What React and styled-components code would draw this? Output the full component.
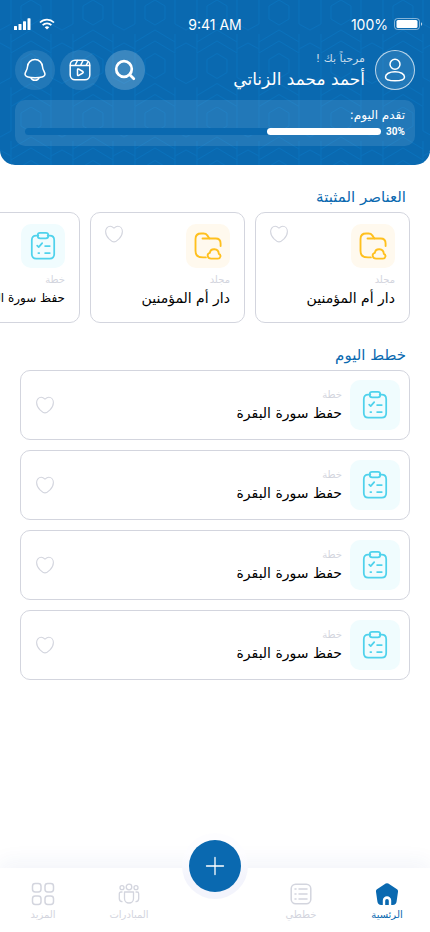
import styled, { createGlobalStyle } from 'styled-components';

const BLUE = '#0a69b0';
const GREY = '#d3d5de';

const GlobalStyle = createGlobalStyle`
	* {
		box-sizing: border-box;
	}
	body {
		margin: 0;
		background: #fff;
		font-family: 'DejaVu Sans', sans-serif;
	}
	button {
		padding: 0;
		border: 0;
		background: none;
		font: inherit;
		cursor: pointer;
	}
	h1, h2, h3, p {
		margin: 0;
		font-weight: 400;
	}
	svg {
		display: block;
	}
`;

const Page = styled.div`
	display: flex;
	flex-direction: column;
	min-height: 100vh;
	overflow-x: hidden;
`;
const Header = styled.header`
	position: relative;
	overflow: hidden;
	padding: 14px 15px 19px;
	border-radius: 0 0 15px 15px;
	background: ${BLUE};
	color: #fff;
`;
const Pattern = styled.svg`
	position: absolute;
	inset: 0;
	width: 100%;
	height: 100%;
`;
const HeaderBody = styled.div`
	position: relative;
`;
const StatusBar = styled.div`
	display: grid;
	grid-template-columns: 1fr auto 1fr;
	align-items: center;
	direction: ltr;
	height: 20px;
	font-family: Inter, sans-serif;
	font-size: 14px;
`;
const StatusSide = styled.div`
	display: flex;
	align-items: center;
	justify-content: ${props => (props.$end ? 'flex-end' : 'flex-start')};
	gap: ${props => (props.$end ? '6px' : '8px')};
	margin: ${props => (props.$end ? '0 -8px 0 0' : '0 0 0 -2px')};
`;
const TopRow = styled.div`
	display: flex;
	align-items: center;
	gap: 10px;
	margin-top: 16px;
`;
const Avatar = styled.button`
	display: grid;
	place-items: center;
	width: 40px;
	height: 40px;
	border: 1px solid rgba(255, 255, 255, 0.7);
	border-radius: 50%;
	background: rgba(255, 255, 255, 0.1);
	color: #fff;
`;
const Greeting = styled.div`
	flex: 1;
`;
const Hello = styled.p`
	font-size: 11px;
	line-height: 18px;
	color: #c8dcec;
`;
const UserName = styled.h1`
	font-size: 17px;
	line-height: 22px;
`;
const RoundButton = styled.button`
	display: grid;
	place-items: center;
	width: 40px;
	height: 40px;
	border-radius: 50%;
	background: rgba(255, 255, 255, ${props => (props.$bright ? 0.2 : 0.1)});
	color: #fff;
`;
const Actions = styled.div`
	display: flex;
	gap: 5px;
`;
const ProgressCard = styled.div`
	margin-top: 10px;
	padding: 6px 10px 7px;
	border-radius: 10px;
	background: rgba(255, 255, 255, 0.1);
	font-size: 12px;
	line-height: 18px;
`;
const ProgressRow = styled.div`
	display: flex;
	align-items: center;
	gap: 5px;
	height: 15px;
`;
const Percent = styled.span`
	font-family: Roboto, sans-serif;
	font-size: 10px;
	font-weight: 700;
	line-height: 15px;
`;
const Track = styled.div`
	flex: 1;
	height: 7px;
	border-radius: 4px;
	background: ${BLUE};
`;
const Fill = styled.div`
	height: 100%;
	border-radius: 4px;
	background: #fff;
`;
const Main = styled.main`
	flex: 1;
	padding: 20px 0;
`;
const SectionTitle = styled.h2`
	padding: 0 24px;
	margin-bottom: 3px;
	font-size: 15px;
	line-height: 24px;
	color: ${BLUE};
`;
const PinnedList = styled.div`
	display: flex;
	gap: 10px;
	padding: 0 20px;
	margin-bottom: 20px;
	overflow-x: auto;
	scrollbar-width: none;
`;
const PinnedCard = styled.article`
	flex: none;
	width: 155px;
	padding: 11px 14px 14px;
	border: 1px solid ${GREY};
	border-radius: 10px;
	overflow: hidden;
`;
const PinnedTop = styled.div`
	display: flex;
	justify-content: space-between;
	align-items: flex-start;
	margin-bottom: 4px;
`;
const IconBox = styled.div`
	display: grid;
	place-items: center;
	width: ${props => props.$size}px;
	height: ${props => props.$size}px;
	border-radius: 10px;
	background: ${props => (props.$kind === 'folder' ? '#fff9ee' : '#f0fcfe')};
	color: ${props => (props.$kind === 'folder' ? '#ffc01e' : '#4fd2ec')};
`;
const HeartButton = styled.button`
	padding: 1px 0;
	color: ${GREY};
`;
const Kind = styled.p`
	font-size: 10px;
	line-height: 16px;
	color: ${GREY};
`;
const ItemTitle = styled.h3`
	font-size: ${props => props.$size}px;
	line-height: 20px;
	white-space: nowrap;
	color: #000;
`;
const PlanList = styled.div`
	display: flex;
	flex-direction: column;
	gap: 10px;
	padding: 0 20px;
`;
const PlanCard = styled.article`
	display: flex;
	align-items: center;
	gap: 8px;
	height: 70px;
	padding: 0 9px 0 15px;
	border: 1px solid ${GREY};
	border-radius: 10px;
`;
const PlanText = styled.div`
	flex: 1;
`;
const NavBar = styled.nav`
	position: relative;
	display: grid;
	grid-template-columns: repeat(5, 1fr);
	height: 64px;
	background: #fff;
	box-shadow: 0 -6px 20px rgba(30, 60, 150, 0.06);
`;
const NavLink = styled.a`
	display: flex;
	flex-direction: column;
	align-items: center;
	padding-top: 14px;
	font-size: 10px;
	line-height: 18px;
	text-decoration: none;
	color: ${props => (props.$active ? BLUE : GREY)};
`;
const AddHolder = styled.div`
	position: absolute;
	top: -35px;
	left: 50%;
	display: grid;
	place-items: center;
	width: 66px;
	height: 66px;
	margin-left: -33px;
	border-radius: 50%;
	background: linear-gradient(#fdfdff 30%, #f3f4fc 70%);
`;
const AddButton = styled.button`
	display: grid;
	place-items: center;
	width: 52px;
	height: 52px;
	border-radius: 50%;
	background: ${BLUE};
	color: #fff;
`;

const Svg = ({ size = 24, width = 1.5, children }) => (
	<svg
		width={size}
		height={size}
		viewBox="0 0 24 24"
		fill="none"
		stroke="currentColor"
		strokeWidth={width}
		strokeLinecap="round"
		strokeLinejoin="round"
		aria-hidden="true"
	>
		{children}
	</svg>
);

const HeartIcon = () => (
	<svg width="18" height="18" viewBox="0 0 18 18" fill="none" stroke="currentColor" strokeWidth="1.1" aria-hidden="true">
		<path d="M9 16.900C6.800 16.900.6 12.400.6 6.600.6 3.600 2.600 1.300 5.200 1.300 7 1.300 7.900 2.100 9 3.100c1.100-1 2-1.800 3.800-1.800 2.600 0 4.600 2.300 4.600 5.300 0 5.800-6.200 10.300-8.400 10.300Z" />
	</svg>
);
const ClipboardIcon = ({ size }) => (
	<Svg size={size} width={1.5}>
		<path d="M8 3.200H6.200C3.500 3.200 2.400 4.500 2.400 7v11.800c0 2.700 1.200 4 3.800 4h11.600c2.600 0 3.800-1.300 3.800-4V7c0-2.500-1.100-3.800-3.800-3.800H16" />
		<rect x="7.500" y=".8" width="9" height="4.600" rx="2" />
		<path d="m7 11.700 1.300 1.200 3-3.300M13.800 12h4M13.800 18h4M8 18h.8" />
	</Svg>
);
const FolderIcon = ({ size }) => (
	<Svg size={size} width={1.6}>
		<path d="M10.200 21.800H7.800C3.300 21.800 1.300 20.300 1.300 16V6C1.300 2.500 2.800 1.300 6.200 1.300h2c1.700 0 2.400.5 3.200 1.600l1 1.500c.5.800 1 1.200 2 1.200h4.200c3 0 4.200 1 4.200 4.200v2.200" />
		<path d="M7.300 5.600h6" />
		<path d="M14.700 22.800h5.800c2.400-.1 3-3.200.8-4-.3-5.300-7.200-5.100-7.700-.9-2.900.7-2.300 4.900 1.100 4.900Z" />
	</Svg>
);

const kindLabels = { folder: 'مجلد', plan: 'خطة' };

const pinned = [
	{ id: 1, kind: 'folder', title: 'دار أم المؤمنين', size: 14 },
	{ id: 2, kind: 'folder', title: 'دار أم المؤمنين', size: 14 },
	{ id: 3, kind: 'plan', title: 'حفظ سورة البقرة', size: 12 },
];
const plans = [1, 2, 3, 4].map(id => ({ id, kind: 'plan', title: 'حفظ سورة البقرة' }));

const Heart = () => (
	<HeartButton type="button" aria-label="المفضلة">
		<HeartIcon />
	</HeartButton>
);

const KindIcon = ({ kind, size }) =>
	kind === 'folder' ? <FolderIcon size={size} /> : <ClipboardIcon size={size} />;

const HeaderPattern = () => (
	<Pattern aria-hidden="true">
		<defs>
			<pattern id="weave" width="62" height="107" patternUnits="userSpaceOnUse">
				<g fill="none" stroke="#0a71bc" strokeWidth="1">
					<path d="M31 0 41 6v13l-10 6-10-6V6Z" />
					<path d="M11 0v24L0 30M11 34V53l20-12 20 12V34M51 0v24l11 6M31 30 11 42M31 30l20 12M0 43l11 6M62 43l-11 6" />
				</g>
				<g transform="translate(31 53.500)" fill="none" stroke="#0a71bc" strokeWidth="1">
					<path d="M0 0 10 6v13L0 25l-10-6V6ZM-20 0v24l-11 6M-20 34v19L0 41l20 12V34M20 0v24l11 6M0 30l-20 12M0 30l20 12" />
				</g>
			</pattern>
		</defs>
		<rect width="100%" height="100%" fill="url(#weave)" />
	</Pattern>
);

const NavItem = ({ label, active, children }) => (
	<NavLink href="#" $active={active}>
		{children}
		{label}
	</NavLink>
);

export default function App() {
	const progress = 30;

	return (
		<Page dir="rtl" lang="ar">
			<GlobalStyle />
			<Header>
				<HeaderPattern />
				<HeaderBody>
					<StatusBar>
						<StatusSide>
							<svg width="18" height="12" viewBox="0 0 18 12" fill="#fff" aria-hidden="true">
								<rect x="1" y="8" width="3" height="4" rx=".6" />
								<rect x="5.500" y="6" width="3" height="6" rx=".6" />
								<rect x="10" y="3.300" width="3" height="8.700" rx=".6" />
								<rect x="14.500" y=".3" width="3" height="11.700" rx=".6" />
							</svg>
							<svg width="16" height="12" viewBox="0 0 16 12" fill="none" stroke="#fff" strokeWidth="1.700" aria-hidden="true">
								<path d="M1 4.500a10 10 0 0 1 14 0M3.600 7.200a6.300 6.300 0 0 1 8.800 0" />
								<path d="M5.700 9.200a3.400 3.400 0 0 1 4.600 0L8 11.500Z" fill="#fff" stroke="none" />
							</svg>
						</StatusSide>
						<span>9:41 AM</span>
						<StatusSide $end>
							<span>100%</span>
							<svg width="29" height="12" viewBox="0 0 29 12" aria-hidden="true">
								<rect x=".5" y=".5" width="25" height="11" rx="3" fill="none" stroke="#fff" opacity=".5" />
								<rect x="2.500" y="2" width="21" height="8" rx="1.500" fill="#fff" />
								<path d="M27 4.200c1.600.5 1.600 3.100 0 3.600Z" fill="#fff" opacity=".7" />
							</svg>
						</StatusSide>
					</StatusBar>
					<TopRow>
						<Avatar type="button" aria-label="الملف الشخصي">
							<Svg>
								<circle cx="12" cy="6.200" r="5" />
								<path d="M12 13.700c5.500 0 9.500 2.400 9.500 5.200 0 2.500-2.500 3.900-9.500 3.900s-9.500-1.400-9.500-3.900c0-2.800 4-5.200 9.500-5.200Z" />
							</Svg>
						</Avatar>
						<Greeting>
							<Hello>مرحباً بك !</Hello>
							<UserName>أحمد محمد الزناتي</UserName>
						</Greeting>
						<Actions>
							<RoundButton type="button" $bright aria-label="بحث">
								<Svg width={2.7}>
									<circle cx="11" cy="11" r="7.800" />
									<path d="m16.800 16.800 4 4" />
								</Svg>
							</RoundButton>
							<RoundButton type="button" aria-label="مقاطع">
								<Svg>
									<rect x="2.200" y="2.200" width="19.600" height="19.600" rx="4.800" />
									<path d="M2.500 7.500h19M9.500 2.500 7 7.500M15 2.500l-2.500 5M20 3.800l-2 3.700M9.500 11.800v4.900c0 .8.600 1.100 1.300.7l4-2.400c.6-.4.600-1.100 0-1.500l-4-2.400c-.7-.4-1.300-.1-1.300.7Z" />
								</Svg>
							</RoundButton>
							<RoundButton type="button" aria-label="الإشعارات">
								<Svg>
									<path d="M12 1.500c-4.300 0-7.200 3.200-7.500 7.200-.2 3.600-2.500 5-2.500 7.600 0 2.400 4.500 3.500 10 3.500s10-1.100 10-3.500c0-2.600-2.300-4-2.500-7.600-.3-4-3.200-7.200-7.500-7.200Z" />
									<path d="M8 19.800c1 3.400 7 3.400 8 0" />
								</Svg>
							</RoundButton>
						</Actions>
					</TopRow>
					<ProgressCard>
						<p id="progress-label">تقدم اليوم:</p>
						<ProgressRow>
							<Percent>{progress}%</Percent>
							<Track
								role="progressbar"
								aria-labelledby="progress-label"
								aria-valuenow={progress}
								aria-valuemin={0}
								aria-valuemax={100}
							>
								<Fill style={{ width: `${progress + 2}%` }} />
							</Track>
						</ProgressRow>
					</ProgressCard>
				</HeaderBody>
			</Header>

			<Main>
				<SectionTitle>العناصر المثبتة</SectionTitle>
				<PinnedList>
					{pinned.map(item => (
						<PinnedCard key={item.id}>
							<PinnedTop>
								<IconBox $size={44} $kind={item.kind}>
									<KindIcon kind={item.kind} size={28} />
								</IconBox>
								<Heart />
							</PinnedTop>
							<Kind>{kindLabels[item.kind]}</Kind>
							<ItemTitle $size={item.size}>{item.title}</ItemTitle>
						</PinnedCard>
					))}
				</PinnedList>

				<SectionTitle>خطط اليوم</SectionTitle>
				<PlanList>
					{plans.map(item => (
						<PlanCard key={item.id}>
							<IconBox $size={50} $kind={item.kind}>
								<KindIcon kind={item.kind} size={28} />
							</IconBox>
							<PlanText>
								<Kind>{kindLabels[item.kind]}</Kind>
								<ItemTitle $size={14}>{item.title}</ItemTitle>
							</PlanText>
							<Heart />
						</PlanCard>
					))}
				</PlanList>
			</Main>

			<NavBar>
				<NavItem label="الرئسية" active>
					<Svg>
						<path
							d="M10.700 1.600 2 7.300C1.200 7.900.9 8.800 1 9.700l1.400 9.800c.3 2 1.600 3.500 3.800 3.500h1.600v-4.500a4.200 4.200 0 0 1 8.400 0V23h1.600c2.200 0 3.500-1.500 3.800-3.500L23 9.700c.1-.9-.2-1.800-1-2.400l-8.700-5.700a2.400 2.400 0 0 0-2.600 0Z"
							fill="currentColor"
							stroke="none"
						/>
						<path d="M10.200 23v-4.200a1.800 1.800 0 0 1 3.600 0V23Z" fill="currentColor" stroke="none" />
					</Svg>
				</NavItem>
				<NavItem label="خططي">
					<Svg width={1.5}>
						<rect x="2.200" y="2.200" width="19.600" height="19.600" rx="4.500" />
						<path d="M10 7h8M10 12h8M10 17h8M6 7h1M6 12h1M6 17h1" />
					</Svg>
				</NavItem>
				<span />
				<NavItem label="المبادرات">
					<Svg width={1.3}>
						<circle cx="12" cy="5" r="2.800" />
						<circle cx="5" cy="5.700" r="2" />
						<circle cx="19" cy="5.700" r="2" />
						<path d="M7.500 10h9v6.500a4.500 4.500 0 0 1-9 0ZM5 10H4c-1 0-1.700.7-1.700 1.700v4.800c0 1.800 1 3 2.700 3.200M19 10h1c1 0 1.700.7 1.700 1.700v4.800c0 1.800-1 3-2.700 3.200" />
					</Svg>
				</NavItem>
				<NavItem label="المزيد">
					<Svg>
						<rect x="1.500" y="1.500" width="8.500" height="8.500" rx="2.700" />
						<rect x="14" y="1.500" width="8.500" height="8.500" rx="2.700" />
						<rect x="1.500" y="14" width="8.500" height="8.500" rx="2.700" />
						<rect x="14" y="14" width="8.500" height="8.500" rx="2.700" />
					</Svg>
				</NavItem>
				<AddHolder>
					<AddButton type="button" aria-label="إضافة">
						<Svg width={1.3}>
							<path d="M12 3.500v17M3.500 12h17" />
						</Svg>
					</AddButton>
				</AddHolder>
			</NavBar>
		</Page>
	);
}
